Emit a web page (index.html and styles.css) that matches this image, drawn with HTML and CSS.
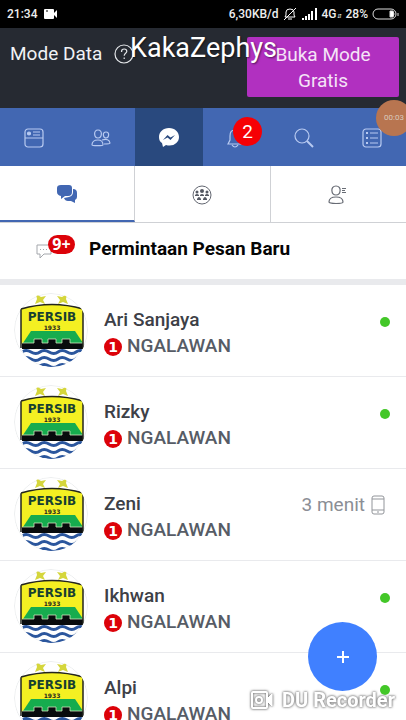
FILE: index.html
```html
<!DOCTYPE html>
<html lang="id">
<head>
<meta charset="utf-8">
<meta name="viewport" content="width=device-width, initial-scale=1">
<title>Pesan</title>
<link rel="stylesheet" href="styles.css">
</head>
<body>
<svg class="sprite" aria-hidden="true">
  <defs>
    <clipPath id="round"><circle cx="37" cy="37" r="37"/></clipPath>
    <clipPath id="shield"><path d="M8 55H69Q68 68 38 76Q9 68 8 55Z"/></clipPath>
  </defs>
  <symbol id="crest" viewBox="0 0 74 74">
    <g clip-path="url(#round)">
      <circle cx="37" cy="37" r="36.5" fill="#fff" stroke="#eceeef"/>
      <path d="M22 1l5 3 5-1-3 4 2 4-5-2-5 2 2-5zM53 1l-5 3-5-1 3 4-2 4 5-2 5 2-2-5z" fill="#d5d63c"/>
      <path d="M7 16Q38 7 69 16V51H7z" fill="#f4f022"/>
      <path d="M17 38H61L69 50H9z" fill="#16ac4e"/>
      <path d="M8 50h12v-4h8v4h6v-4h8v4h6v-4h8v4h13v6H8z" fill="#080b0d"/>
      <path d="M8 50h12v-4h8v4h6v-4h8v4h6v-4h8v4h13" fill="none" stroke="#cfe5bc" stroke-width=".8"/>
      <g clip-path="url(#shield)" fill="none" stroke="#2b569d" stroke-width="3">
        <path d="M-1 58q5 4 9 1t9 0 9 0 9 0 9 0 9 0 9 0 9 0M-1 65q5 4 9 1t9 0 9 0 9 0 9 0 9 0 9 0 9 0M-1 72q5 4 9 1t9 0 9 0 9 0 9 0 9 0 9 0 9 0"/>
      </g>
      <path d="M7 55V16Q38 7 69 16V55" fill="none" stroke="#23251d" stroke-width="1.500"/>
    </g>
  </symbol>
</svg>

<header class="status">
  <span class="status-side">21:34
    <svg width="16" height="12" viewBox="0 0 16 12" fill="#fff" aria-hidden="true"><rect x="1" y="1" width="10" height="10" rx="1"/><path d="M11 5l3-3v8l-3-3z"/><path d="M3 3h2" stroke="#000"/></svg>
  </span>
  <span class="status-side status-right">6,30KB/d
    <svg width="14" height="14" viewBox="0 0 14 14" fill="none" stroke="#fff" aria-hidden="true"><path d="M2 10h10l-1-2V5q0-3-4-3T3 5v3zM5 12h4M1 13L13 1"/></svg>
    <svg class="signal" width="17" height="12" viewBox="0 0 17 12" fill="#fff" aria-hidden="true"><path d="M1 10h2v2H1zM4 8h2v4H4zM7 6h2v6H7zM10 3h2v9h-2zM14 0h2v12h-2z"/></svg>
    <span class="network">4G<small>⇵</small></span>
    <span>28%</span>
    <svg width="27" height="12" viewBox="0 0 27 12" fill="none" stroke="#ddd" aria-hidden="true"><rect x="1" y="1" width="23" height="10" rx="5"/><path d="M18 3h3q2 3 0 6h-3z" fill="#fff"/><path d="M26 5v3"/></svg>
  </span>
</header>

<section class="data-mode">
  <span class="mode-label">Mode Data
    <svg width="20" height="20" viewBox="0 0 20 20" fill="none" stroke="#e4e7ea" stroke-width="1.200" aria-hidden="true"><circle cx="10" cy="10" r="9"/><path d="M7.500 8q0-3 2.700-3 2.600 0 2.600 2.300c0 2-2.600 2-2.600 4.400M10.200 13.500v1.500"/></svg>
  </span>
  <button class="free-button" type="button">Buka Mode Gratis</button>
  <span class="channel">KakaZephys</span>
  <span class="timer">00:03</span>
</section>

<nav class="main-nav">
  <a href="#" aria-label="Beranda"><svg width="20" height="20" viewBox="0 0 20 20"><rect x="1" y="1" width="18" height="18" rx="3"/><path d="M1 10h18M9 4h7M9 7h7"/><circle cx="5" cy="5.500" r="1.500" fill="#b8caf1"/></svg></a>
  <a href="#" aria-label="Teman"><svg width="20" height="20" viewBox="0 0 20 20"><path d="M7 2c-5 0-4 8 0 8s5-8 0-8zM15 4c-4 0-3 6 0 6s4-6 0-6zM1 17c0-3 2-5 6-5s5 2 5 5c0 1-11 1-11 0zM11 12q7-2 8 3 0 1-6 1"/></svg></a>
  <a href="#" class="active" aria-label="Pesan"><svg width="22" height="22" viewBox="0 0 22 22"><path d="M11 1C5 1 1 5 1 10c0 3 1 5 3 6l1 4 3-2c7 2 13-2 13-8 0-5-4-9-10-9z" fill="#fff" stroke="none"/><path d="M5 13l4.500-5 3 2.500L17 8l-4.500 5-3-2.500z" fill="#29497e" stroke="none"/></svg></a>
  <a href="#" aria-label="Notifikasi"><svg width="20" height="20" viewBox="0 0 20 20"><path d="M1 16l2-4V8q0-6 5-6t5 6v4l2 4zM5 17q3 4 6 0"/></svg><span class="alert">2</span></a>
  <a href="#" aria-label="Cari"><svg width="20" height="20" viewBox="0 0 20 20"><circle cx="8" cy="8" r="7"/><path d="M13 13l6 6" stroke-width="2"/></svg></a>
  <a href="#" aria-label="Menu"><svg width="20" height="20" viewBox="0 0 20 20"><rect x="1" y="1" width="18" height="18" rx="3"/><path d="M8 5h8M8 10h8M8 15h8"/><path d="M4 5h2M4 10h2M4 15h2" stroke-width="2"/></svg></a>
</nav>

<nav class="tabs">
  <a href="#" class="selected" aria-label="Obrolan"><svg width="20" height="20" viewBox="0 0 20 20" fill="#4267b2" aria-hidden="true"><path d="M4 1h8q3 0 3 3v4q0 4-4 4H8l-4 3v-3Q0 11 0 8V4q0-3 4-3z"/><path d="M16 5q4 0 4 4v4q0 2-2 3v3l-4-2h-3q-3 0-4-3l5-1q4-1 4-5z"/></svg></a>
  <a href="#" aria-label="Grup"><svg width="20" height="20" viewBox="0 0 20 20" fill="#555963" aria-hidden="true"><circle cx="10" cy="10" r="9" fill="none" stroke="#626670"/><circle cx="5" cy="7" r="1.500"/><circle cx="10" cy="6" r="2"/><circle cx="15" cy="7" r="1.500"/><path d="M3 10q2-2 4 0v1H3zM8 10q2-2 4 0v1H8zM13 10q2-2 4 0v1h-4zM5 14q2-4 4 0v1H5zM11 14q2-4 4 0v1h-4z"/></svg></a>
  <a href="#" aria-label="Kontak"><svg width="20" height="20" viewBox="0 0 20 20" fill="none" stroke="#676b74" stroke-width="1.200" aria-hidden="true"><path d="M8 1c-6 0-5 9 0 9s6-9 0-9zM1 17c0-4 3-5 7-5s7 1 7 5c0 2-14 2-14 0z"/><path d="M14 3.500h4M14 5.500h3M14 7.500h4" stroke-width="1"/></svg></a>
</nav>

<a class="requests" href="#">
  <span class="request-icon">
    <svg width="16" height="15" viewBox="0 0 16 15" fill="none" stroke="#a4a7ac" aria-hidden="true"><path d="M1 1h14v9H8l-4 4v-4H1z"/><path d="M4 5.500h8" stroke-dasharray="1 2"/></svg>
    <span class="request-count">9+</span>
  </span>
  <span>Permintaan Pesan Baru</span>
</a>

<main class="chats">
  <a class="chat" href="#">
    <svg class="avatar" viewBox="0 0 74 74"><use href="#crest"/><text class="crest-name" x="38" y="28">PERSIB</text><text class="crest-year" x="38" y="37">1933</text></svg>
    <span class="chat-text"><span class="name">Ari Sanjaya</span><span class="message"><span class="count">1</span>NGALAWAN</span></span>
    <span class="online"></span>
  </a>
  <a class="chat" href="#">
    <svg class="avatar" viewBox="0 0 74 74"><use href="#crest"/><text class="crest-name" x="38" y="28">PERSIB</text><text class="crest-year" x="38" y="37">1933</text></svg>
    <span class="chat-text"><span class="name">Rizky</span><span class="message"><span class="count">1</span>NGALAWAN</span></span>
    <span class="online"></span>
  </a>
  <a class="chat" href="#">
    <svg class="avatar" viewBox="0 0 74 74"><use href="#crest"/><text class="crest-name" x="38" y="28">PERSIB</text><text class="crest-year" x="38" y="37">1933</text></svg>
    <span class="chat-text"><span class="name">Zeni</span><span class="message"><span class="count">1</span>NGALAWAN</span></span>
    <span class="last-seen">3 menit <svg width="14" height="20" viewBox="0 0 14 20" fill="none" stroke="#92959a" aria-hidden="true"><rect x="1" y="1" width="12" height="18" rx="2"/><path d="M1 4h12M1 15h12M6 17h2"/></svg></span>
  </a>
  <a class="chat" href="#">
    <svg class="avatar" viewBox="0 0 74 74"><use href="#crest"/><text class="crest-name" x="38" y="28">PERSIB</text><text class="crest-year" x="38" y="37">1933</text></svg>
    <span class="chat-text"><span class="name">Ikhwan</span><span class="message"><span class="count">1</span>NGALAWAN</span></span>
    <span class="online"></span>
  </a>
  <a class="chat" href="#">
    <svg class="avatar" viewBox="0 0 74 74"><use href="#crest"/><text class="crest-name" x="38" y="28">PERSIB</text><text class="crest-year" x="38" y="37">1933</text></svg>
    <span class="chat-text"><span class="name">Alpi</span><span class="message"><span class="count">1</span>NGALAWAN</span></span>
    <span class="online"></span>
  </a>
</main>

<button class="compose" type="button" aria-label="Pesan baru"><svg width="14" height="14" viewBox="0 0 14 14" stroke="#fff" stroke-width="2" aria-hidden="true"><path d="M7 1v12M1 7h12"/></svg></button>
<div class="recorder">
  <svg width="24" height="20" viewBox="0 0 24 20" fill="none" stroke="#fff" stroke-width="2" aria-hidden="true"><rect x="2" y="2" width="15" height="16" rx="1"/><circle cx="9" cy="10" r="3"/><path d="M18 8l4-4v12l-4-4z" fill="#fff" stroke-width="1"/></svg>
  <span>DU Recorder</span>
</div>
</body>
</html>
```
FILE: styles.css
```css
* {
  box-sizing: border-box;
}

body {
  display: flex;
  flex-direction: column;
  height: 100vh;
  margin: 0;
  overflow: hidden;
  background: #fff;
  color: #3d4047;
  font: 19px/26px Roboto, sans-serif;
}

a {
  color: inherit;
  text-decoration: none;
}

svg {
  flex: none;
}

.sprite {
  position: absolute;
  width: 0;
  height: 0;
}

.status {
  display: flex;
  flex: none;
  align-items: center;
  justify-content: space-between;
  height: 28px;
  padding: 0 7px;
  background: #000;
  color: #eee;
  font-size: 12px;
  font-weight: 500;
  white-space: nowrap;
}

.status-side {
  display: flex;
  align-items: center;
  gap: 6px;
}

.status-right {
  gap: 4px;
}

.network small {
  font-size: 6px;
  line-height: 1;
}

.data-mode {
  position: relative;
  display: flex;
  flex: none;
  justify-content: space-between;
  padding: 9px 7px 11px 10px;
  background: #262a32;
  color: #f0f2f5;
}

.mode-label {
  display: flex;
  align-items: center;
  gap: 12px;
  height: 34px;
}

.free-button {
  width: 152px;
  padding: 5px 20px 3px;
  border: 0;
  border-radius: 2px;
  background: #b130c0;
  color: #f5e4f7;
  font: inherit;
}

.channel {
  position: absolute;
  top: 4px;
  left: 130px;
  color: #fff;
  font-size: 27px;
  line-height: 32px;
  text-shadow: 1px 1px 2px #0008;
}

.timer {
  position: absolute;
  z-index: 2;
  top: 72px;
  right: -6px;
  width: 36px;
  height: 36px;
  border-radius: 50%;
  background: #b87550;
  color: #d9c9bd;
  font-size: 8px;
  line-height: 36px;
  text-align: center;
}

.main-nav {
  display: grid;
  flex: none;
  grid-template-columns: repeat(6, 1fr);
  height: 58px;
  background: #4267b2;
}

.main-nav a {
  position: relative;
  display: grid;
  place-items: center;
  padding-top: 2px;
}

.main-nav svg {
  fill: none;
  stroke: #b8caf1;
  stroke-width: 1.2;
}

.main-nav .active {
  background: #29497e;
}

.alert {
  position: absolute;
  top: 9px;
  left: 30px;
  width: 29px;
  height: 29px;
  border-radius: 50%;
  background: #f60005;
  color: #fff;
  line-height: 29px;
  text-align: center;
}

.tabs {
  display: grid;
  flex: none;
  grid-template-columns: repeat(3, 1fr);
  height: 57px;
  border-bottom: 1px solid #cfd1d5;
}

.tabs a {
  display: grid;
  place-items: center;
  border-right: 1px solid #cfd1d5;
  padding-top: 2px;
}

.tabs a:last-child {
  border-right: 0;
}

.tabs .selected {
  border-bottom: 2px solid #4267b2;
}

.requests {
  display: flex;
  flex: none;
  align-items: center;
  height: 62px;
  padding: 0 36px 4px;
  border-bottom: 6px solid #e9eaed;
  color: #050505;
  font-weight: 700;
}

.request-icon {
  position: relative;
  display: flex;
  width: 53px;
  padding-top: 5px;
}

.request-count {
  position: absolute;
  top: -4px;
  left: 12px;
  width: 27px;
  height: 19px;
  border-radius: 10px;
  background: #dc0209;
  color: #fff;
  font-family: "Noto Sans", sans-serif;
  font-size: 16px;
  line-height: 19px;
  text-align: center;
}

.chats {
  flex: 1;
  min-height: 0;
  overflow: hidden;
}

.chat {
  display: flex;
  align-items: flex-start;
  gap: 16px;
  height: 92px;
  padding: 8px 16px 0 14px;
  border-bottom: 1px solid #e9eaed;
}

.avatar {
  width: 74px;
  height: 74px;
}

.crest-name,
.crest-year {
  fill: #173f31;
  font-family: "DejaVu Sans", sans-serif;
  font-weight: 700;
  text-anchor: middle;
}

.crest-name {
  font-size: 12px;
}

.crest-year {
  fill: #29291c;
  font-size: 6px;
}

.chat-text {
  display: flex;
  flex: 1;
  flex-direction: column;
  padding-top: 14px;
  font-weight: 500;
}

.message {
  display: flex;
  align-items: center;
  gap: 5px;
  color: #565c66;
}

.count {
  width: 18px;
  height: 18px;
  margin-top: 2px;
  border-radius: 50%;
  background: #dc0209;
  color: #fff;
  font-family: "DejaVu Sans", sans-serif;
  font-size: 14px;
  font-weight: 700;
  line-height: 18px;
  text-align: center;
}

.online {
  width: 10px;
  height: 10px;
  margin-top: 24px;
  border-radius: 50%;
  background: #43c728;
}

.last-seen {
  display: flex;
  align-items: center;
  gap: 6px;
  padding-top: 15px;
  color: #8b8e95;
}

.chat .last-seen {
  padding-right: 5px;
}

.compose {
  position: fixed;
  right: 29px;
  bottom: 29px;
  display: grid;
  place-items: center;
  width: 69px;
  height: 69px;
  padding: 0;
  border: 0;
  border-radius: 50%;
  background: #4080ff;
}

.recorder {
  position: fixed;
  right: 11px;
  bottom: 7px;
  display: flex;
  align-items: center;
  gap: 8px;
  color: #fff;
  font-size: 20px;
  font-weight: 700;
  filter: drop-shadow(0 0 1px #777) drop-shadow(0 0 1px #aaa);
}
```
